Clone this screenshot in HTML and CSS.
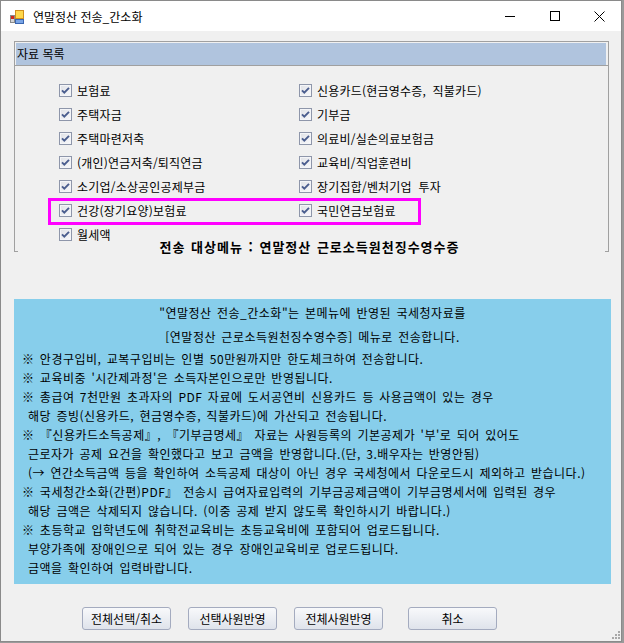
FILE: index.html
```html
<!DOCTYPE html>
<html lang="ko">
<head>
    <meta charset="UTF-8">
    <title>연말정산 전송_간소화</title>
    <link rel="stylesheet" href="styles.css">
</head>
<body>
    <div class="window">
        <div class="titlebar">
            <svg class="app-icon" width="14" height="14" viewBox="0 0 14 14">
                <rect x="5.5" y="0.5" width="8" height="8" fill="#ffd84a" stroke="#d18f1b"/>
                <rect x="0.5" y="5.5" width="4" height="7" fill="#d4d4d4" stroke="#8a8a8a"/>
                <rect x="1" y="6" width="3" height="3" fill="#d0281c"/>
                <rect x="5.5" y="9.5" width="8" height="4" fill="#7aa5e6" stroke="#3a66b0"/>
            </svg>
            <span class="title">연말정산 전송_간소화</span>
            <div class="caption-buttons">
                <span class="cap-btn cap-min">
                    <svg width="10" height="10" viewBox="0 0 10 10"><path d="M0 5.5h10" stroke="#000"/></svg>
                </span>
                <span class="cap-btn cap-max">
                    <svg width="10" height="10" viewBox="0 0 10 10"><rect x="0.5" y="0.5" width="9" height="9" fill="none" stroke="#000"/></svg>
                </span>
                <span class="cap-btn cap-close">
                    <svg width="11" height="11" viewBox="0 0 11 11"><path d="M0.5 0.5l10 10M10.5 0.5l-10 10" stroke="#000"/></svg>
                </span>
            </div>
        </div>

        <div class="client">
            <div class="group">
                <div class="group-head">
                    <div class="group-title">자료 목록</div>
                </div>
                <div class="check-list">
                    <label class="check-item"><span class="check-box"><svg viewBox="0 0 11 11"><path d="M2 5.3l2.3 2.4L9 2.8"/></svg></span>보험료</label>
                    <label class="check-item"><span class="check-box"><svg viewBox="0 0 11 11"><path d="M2 5.3l2.3 2.4L9 2.8"/></svg></span>신용카드(현금영수증, 직불카드)</label>
                    <label class="check-item"><span class="check-box"><svg viewBox="0 0 11 11"><path d="M2 5.3l2.3 2.4L9 2.8"/></svg></span>주택자금</label>
                    <label class="check-item"><span class="check-box"><svg viewBox="0 0 11 11"><path d="M2 5.3l2.3 2.4L9 2.8"/></svg></span>기부금</label>
                    <label class="check-item"><span class="check-box"><svg viewBox="0 0 11 11"><path d="M2 5.3l2.3 2.4L9 2.8"/></svg></span>주택마련저축</label>
                    <label class="check-item"><span class="check-box"><svg viewBox="0 0 11 11"><path d="M2 5.3l2.3 2.4L9 2.8"/></svg></span>의료비/실손의료보험금</label>
                    <label class="check-item"><span class="check-box"><svg viewBox="0 0 11 11"><path d="M2 5.3l2.3 2.4L9 2.8"/></svg></span>(개인)연금저축/퇴직연금</label>
                    <label class="check-item"><span class="check-box"><svg viewBox="0 0 11 11"><path d="M2 5.3l2.3 2.4L9 2.8"/></svg></span>교육비/직업훈련비</label>
                    <label class="check-item"><span class="check-box"><svg viewBox="0 0 11 11"><path d="M2 5.3l2.3 2.4L9 2.8"/></svg></span>소기업/소상공인공제부금</label>
                    <label class="check-item"><span class="check-box"><svg viewBox="0 0 11 11"><path d="M2 5.3l2.3 2.4L9 2.8"/></svg></span>장기집합/벤처기업 투자</label>
                    <label class="check-item"><span class="check-box"><svg viewBox="0 0 11 11"><path d="M2 5.3l2.3 2.4L9 2.8"/></svg></span>건강(장기요양)보험료</label>
                    <label class="check-item"><span class="check-box"><svg viewBox="0 0 11 11"><path d="M2 5.3l2.3 2.4L9 2.8"/></svg></span>국민연금보험료</label>
                    <label class="check-item"><span class="check-box"><svg viewBox="0 0 11 11"><path d="M2 5.3l2.3 2.4L9 2.8"/></svg></span>월세액</label>
                </div>
                <div class="target-menu">전송 대상메뉴 : 연말정산 근로소득원천징수영수증</div>
                <!-- marker drawn over the two rows -->
                <div class="highlight"></div>
            </div>

            <div class="notice">
                <div class="line center">"연말정산 전송_간소화"는 본메뉴에 반영된 국세청자료를</div>
                <div class="line center">[연말정산 근로소득원천징수영수증] 메뉴로 전송합니다.</div>
                <div class="line note">※ 안경구입비, 교복구입비는 인별 50만원까지만 한도체크하여 전송합니다.</div>
                <div class="line note">※ 교육비중 '시간제과정'은 소득자본인으로만 반영됩니다.</div>
                <div class="line note">※ 총급여 7천만원 초과자의 PDF 자료에 도서공연비 신용카드 등 사용금액이 있는 경우</div>
                <div class="line cont">해당 증빙(신용카드, 현금영수증, 직불카드)에 가산되고 전송됩니다.</div>
                <div class="line note">※ 『신용카드소득공제』, 『기부금명세』 자료는 사원등록의 기본공제가 '부'로 되어 있어도</div>
                <div class="line cont">근로자가 공제 요건을 확인했다고 보고 금액을 반영합니다.(단, 3.배우자는 반영안됨)</div>
                <div class="line cont">(→ 연간소득금액 등을 확인하여 소득공제 대상이 아닌 경우 국세청에서 다운로드시 제외하고 받습니다.)</div>
                <div class="line note">※ 국세청간소화(간편)PDF』 전송시 급여자료입력의 기부금공제금액이 기부금명세서에 입력된 경우</div>
                <div class="line cont">해당 금액은 삭제되지 않습니다. (이중 공제 받지 않도록 확인하시기 바랍니다.)</div>
                <div class="line note">※ 초등학교 입학년도에 취학전교육비는 초등교육비에 포함되어 업로드됩니다.</div>
                <div class="line cont">부양가족에 장애인으로 되어 있는 경우 장애인교육비로 업로드됩니다.</div>
                <div class="line cont">금액을 확인하여 입력바랍니다.</div>
            </div>

            <div class="footer">
                <button class="btn">전체선택/취소</button>
                <button class="btn">선택사원반영</button>
                <button class="btn">전체사원반영</button>
                <button class="btn btn-cancel">취소</button>
                <svg class="grip" width="8" height="8" viewBox="0 0 8 8">
                    <rect x="6" y="0" width="2" height="2"/>
                    <rect x="3" y="3" width="2" height="2"/>
                    <rect x="6" y="3" width="2" height="2"/>
                    <rect x="0" y="6" width="2" height="2"/>
                    <rect x="3" y="6" width="2" height="2"/>
                    <rect x="6" y="6" width="2" height="2"/>
                </svg>
            </div>
        </div>
    </div>
</body>
</html>
```

FILE: styles.css
```css
body {
    margin: 0;
    background: #9a9a9a;
    font-family: "Noto Sans CJK KR", "Noto Sans", sans-serif;
    font-size: 12px;
    color: #000;
}
.window {
    width: 622px;
    height: 642px;
    box-sizing: border-box;
    border: 1px solid #8a8a8a;
    background: #f0f0f0;
    display: flex;
    flex-direction: column;
}

/* title bar */
.titlebar {
    flex: none;
    height: 30px;
    background: #fff;
    display: flex;
    align-items: center;
}
.app-icon {
    margin-left: 9px;
    margin-top: 1px;
}
.title {
    margin-left: 9px;
    font-size: 12px;
}
.caption-buttons {
    margin-left: auto;
    height: 100%;
    display: flex;
}
.cap-btn {
    display: flex;
    align-items: center;
    justify-content: center;
}
.cap-btn svg {
    display: block;
}
.cap-min { width: 46px; }
.cap-max { width: 44px; }
.cap-close { width: 44px; }

/* client area */
.client {
    flex: 1;
    display: flex;
    flex-direction: column;
    padding: 10px 0 0 13px;
}
.group {
    position: relative;
    width: 595px;
    box-sizing: border-box;
    border: 1px solid #a0a0a0;
}
.group-head {
    border-bottom: 1px solid #a0a0a0;
    padding: 1px 2px 0 1px;
}
.group-title {
    height: 22px;
    line-height: 22px;
    padding-left: 1px;
    background: #b0c4de;
}
.check-list {
    display: grid;
    grid-template-columns: 240px 240px;
    grid-auto-rows: 24px;
    padding: 12px 0 0 44px;
    word-spacing: 3px;
    letter-spacing: 0.2px;
}
.check-item {
    display: flex;
    align-items: center;
    gap: 5px;
    white-space: nowrap;
}
.check-box {
    width: 13px;
    height: 13px;
    box-sizing: border-box;
    border: 1px solid #8e96aa;
    background: linear-gradient(135deg, #dfe1e6, #f9f9fb);
    box-shadow: inset 0 0 0 1px #f4f5f8;
}
.check-box svg {
    display: block;
    width: 11px;
    height: 11px;
}
.check-box path {
    fill: none;
    stroke: #4a5d8e;
    stroke-width: 1.9;
}
.target-menu {
    margin: -6px 3px -3px;
    padding-right: 4px;
    line-height: 14px;
    font-size: 13px;
    font-weight: bold;
    letter-spacing: 1px;
    word-spacing: 1px;
    text-align: center;
    background: #f0f0f0;
}
.highlight {
    position: absolute;
    left: 33px;
    top: 156px;
    width: 373px;
    height: 27px;
    box-sizing: border-box;
    border: 3px solid #ff00ff;
}

/* info panel */
.notice {
    width: 597px;
    margin-top: 47px;
    padding: 2px 0 7px 0;
    box-sizing: border-box;
    background: #87ceeb;
    letter-spacing: 0.5px;
    word-spacing: 1.5px;
    white-space: nowrap;
}
.line {
    line-height: 19px;
}
.line.center {
    line-height: 24px;
    text-align: center;
}
.line.note {
    padding-left: 8px;
}
.line.cont {
    padding-left: 14px;
}

/* buttons */
.footer {
    flex: 1;
    display: flex;
    align-items: flex-start;
    gap: 17px;
    padding: 23px 0 0 68px;
}
.btn {
    width: 89px;
    height: 23px;
    padding: 0;
    font-family: inherit;
    font-size: 12px;
    color: #000;
    border: 1px solid #a4abbf;
    border-radius: 3px;
    background: linear-gradient(#f8f9fb, #dfe3eb);
}
.btn-cancel {
    margin-left: 8px;
}
.grip {
    margin: 0 1px 2px auto;
    align-self: flex-end;
    fill: #a8a8a8;
}
```
